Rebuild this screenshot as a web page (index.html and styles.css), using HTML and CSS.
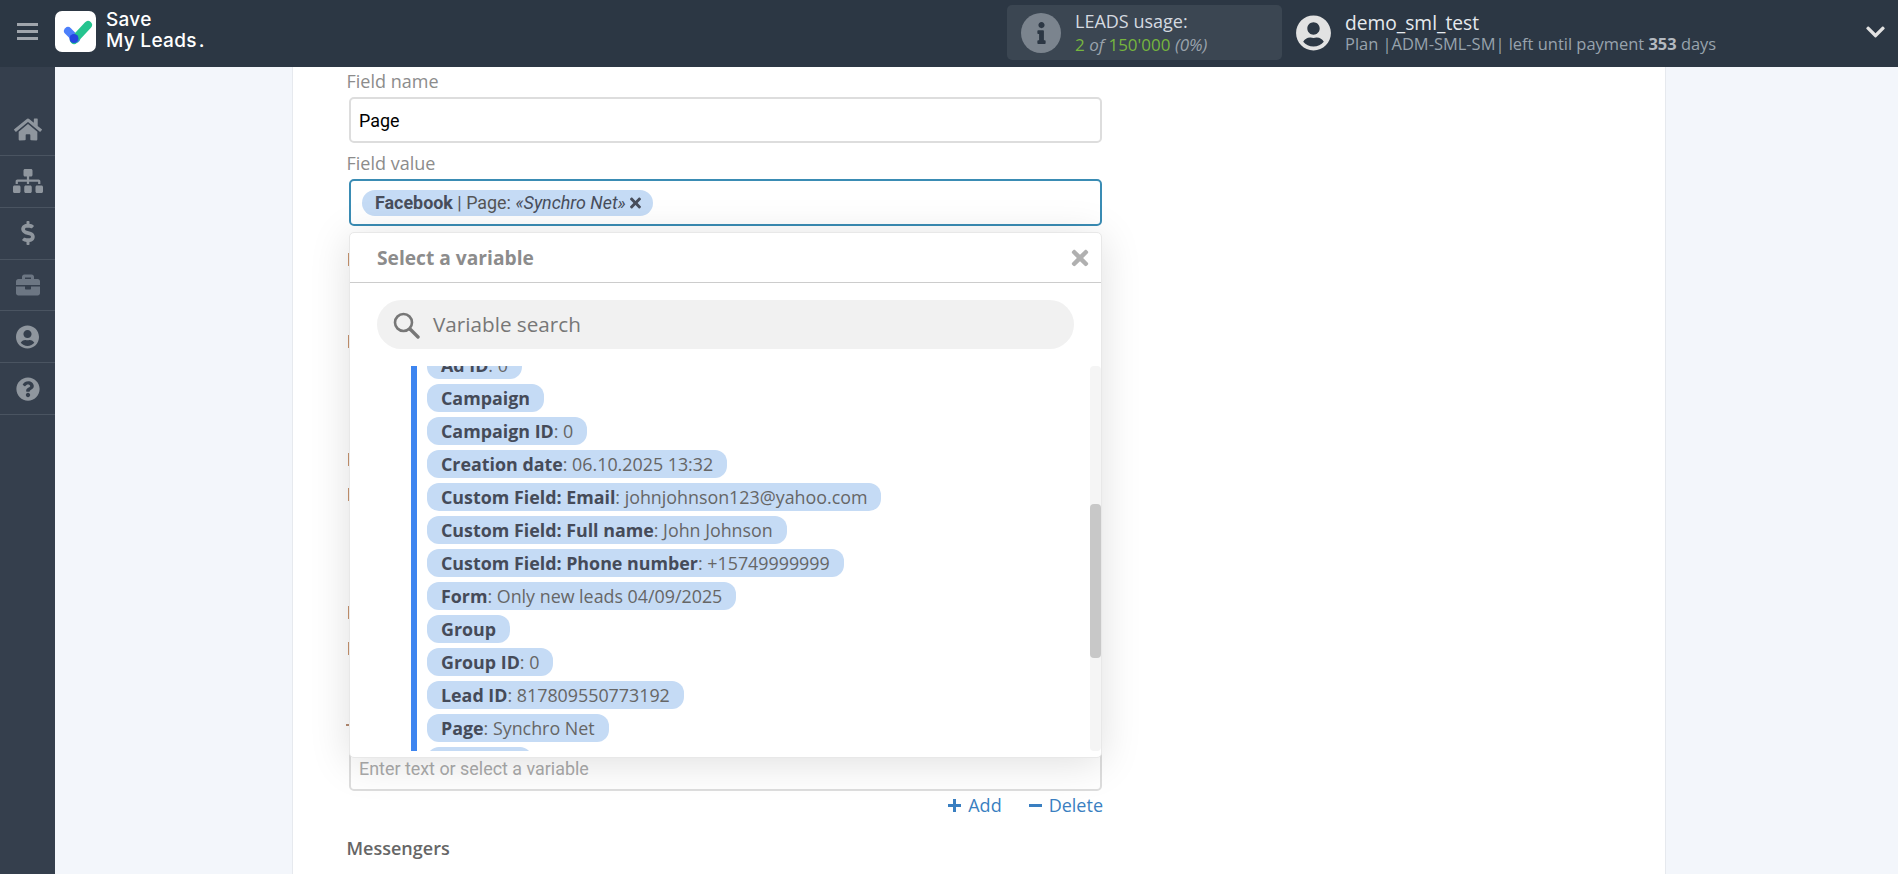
FILE: index.html
```html
<!DOCTYPE html>
<html lang="en">
<head>
<meta charset="utf-8">
<title>Save My Leads</title>
<link rel="stylesheet" href="styles.css">
</head>
<body>
<header class="topbar">
  <div class="burger"><span></span><span></span><span></span></div>
  <div class="logo-mark">
    <svg viewBox="0 0 41 41" width="41" height="41"><path d="M13 20l8 8" stroke="#4c7ffb" stroke-width="8" stroke-linecap="round" fill="none"/><path d="M19 29L33 14" stroke="#25c48f" stroke-width="8" stroke-linecap="round" fill="none"/><circle cx="19" cy="27.500" r="4.500" fill="#2545e0"/></svg>
  </div>
  <div class="logo-text">Save<br>My Leads<span class="logo-dot">.</span></div>
  <div class="usage">
    <div class="usage-icon"><svg viewBox="0 0 192 512" width="9" height="22"><path fill="#2c3744" d="M20 424.229h20V279.771H20c-11.046 0-20-8.954-20-20V212c0-11.046 8.954-20 20-20h112c11.046 0 20 8.954 20 20v212.229h20c11.046 0 20 8.954 20 20V492c0 11.046-8.954 20-20 20H20c-11.046 0-20-8.954-20-20v-47.771c0-11.046 8.954-20 20-20zM96 0C56.235 0 24 32.235 24 72s32.235 72 72 72 72-32.235 72-72S135.764 0 96 0z"/></svg></div>
    <div class="usage-text">
      <div class="usage-title">LEADS usage:</div>
      <div class="usage-count"><span class="green">2 <i>of</i> 150'000</span> <i class="muted">(0%)</i></div>
    </div>
  </div>
  <div class="account">
    <svg class="avatar" viewBox="0 0 496 512" width="35" height="36"><path fill="#e2e2e2" d="M248 8C111 8 0 119 0 256s111 248 248 248 248-111 248-248S385 8 248 8zm0 96c48.600 0 88 39.400 88 88s-39.400 88-88 88-88-39.400-88-88 39.400-88 88-88zm0 344c-58.700 0-111.300-26.600-146.500-68.200 18.800-35.400 55.600-59.800 98.500-59.800 2.400 0 4.800.4 7.100 1.100 13 4.200 26.600 6.900 40.900 6.900 14.300 0 28-2.700 40.900-6.900 2.300-.7 4.700-1.100 7.100-1.100 42.900 0 79.700 24.400 98.500 59.800C359.300 421.400 306.700 448 248 448z"/></svg>
    <div>
      <div class="account-name">demo_sml_test</div>
      <div class="account-plan">Plan |ADM-SML-SM| left until payment <b>353</b> days</div>
    </div>
  </div>
  <svg class="chevron" viewBox="0 0 448 512" width="19" height="22"><path fill="#e2e2e2" d="M207.029 381.476L12.686 187.132c-9.373-9.373-9.373-24.569 0-33.941l22.667-22.667c9.357-9.357 24.522-9.375 33.901-.04L224 284.505l154.745-154.021c9.379-9.335 24.544-9.317 33.901.04l22.667 22.667c9.373 9.373 9.373 24.569 0 33.941L240.971 381.476c-9.373 9.372-24.569 9.372-33.942 0z"/></svg>
</header>
<div class="layout">
  <nav class="sidebar">
    <a class="nav-item"><svg viewBox="0 0 576 512" width="28" height="25"><path d="M280.370 148.260L96 300.110V464a16 16 0 0 0 16 16l112.060-.29a16 16 0 0 0 15.920-16V368a16 16 0 0 1 16-16h64a16 16 0 0 1 16 16v95.640a16 16 0 0 0 16 16.050L464 480a16 16 0 0 0 16-16V300L295.670 148.260a12.190 12.190 0 0 0-15.300 0zM571.600 251.470L488 182.560V44.050a12 12 0 0 0-12-12h-56a12 12 0 0 0-12 12v72.610L318.470 43a48 48 0 0 0-61 0L4.340 251.470a12 12 0 0 0-1.600 16.900l25.500 31A12 12 0 0 0 45.150 301l235.220-193.740a12.190 12.190 0 0 1 15.300 0L530.900 301a12 12 0 0 0 16.900-1.600l25.500-31a12 12 0 0 0-1.700-16.930z"/></svg></a>
    <a class="nav-item"><svg viewBox="0 0 640 512" width="30" height="24"><path d="M128 352H32c-17.670 0-32 14.330-32 32v96c0 17.670 14.330 32 32 32h96c17.670 0 32-14.330 32-32v-96c0-17.670-14.330-32-32-32zm-24-80h192v48h48v-48h192v48h48v-57.590c0-21.170-17.230-38.410-38.410-38.410H344v-64h40c17.670 0 32-14.330 32-32V32c0-17.670-14.330-32-32-32H256c-17.670 0-32 14.330-32 32v96c0 17.670 14.330 32 32 32h40v64H94.410C73.230 224 56 241.230 56 262.410V320h48v-48zm264 80h-96c-17.670 0-32 14.330-32 32v96c0 17.670 14.330 32 32 32h96c17.670 0 32-14.330 32-32v-96c0-17.670-14.330-32-32-32zm240 0h-96c-17.670 0-32 14.330-32 32v96c0 17.670 14.330 32 32 32h96c17.670 0 32-14.330 32-32v-96c0-17.670-14.330-32-32-32z"/></svg></a>
    <a class="nav-item"><svg viewBox="0 0 288 512" width="14" height="24"><path d="M209.200 233.400l-108-31.600C88.700 198.200 80 186.500 80 173.500c0-16.300 13.200-29.500 29.500-29.500h66.300c12.200 0 24.200 3.700 34.200 10.500 6.100 4.100 14.300 3.100 19.500-2l34.800-34c7.100-6.900 6.100-18.400-1.800-24.500C238 74.800 207.400 64.100 176 64V16c0-8.800-7.200-16-16-16h-32c-8.800 0-16 7.200-16 16v48h-2.500C45.800 64-5.400 118.700.5 183.600c4.200 46.100 39.400 83.600 83.800 96.600l102.500 30c12.500 3.700 21.200 15.300 21.200 28.300 0 16.300-13.200 29.500-29.500 29.500h-66.300C100 368 88 364.300 78 357.500c-6.100-4.100-14.300-3.100-19.500 2l-34.800 34c-7.100 6.900-6.100 18.400 1.800 24.500 24.500 19.200 55.100 29.900 86.500 30v48c0 8.800 7.200 16 16 16h32c8.800 0 16-7.200 16-16v-48.200c46.600-.9 90.300-28.600 105.700-72.700 21.500-61.600-14.600-124.800-72.500-141.700z"/></svg></a>
    <a class="nav-item nav-dim"><svg viewBox="0 0 512 512" width="24" height="24"><path d="M320 336c0 8.840-7.160 16-16 16h-96c-8.840 0-16-7.160-16-16v-48H0v144c0 25.600 22.400 48 48 48h416c25.600 0 48-22.400 48-48V288H320v48zm144-208h-80V80c0-25.600-22.400-48-48-48H176c-25.600 0-48 22.400-48 48v48H48c-25.600 0-48 22.400-48 48v80h512v-80c0-25.600-22.400-48-48-48zm-144 0H192V96h128v32z"/></svg></a>
    <a class="nav-item"><svg viewBox="0 0 496 512" width="23" height="24"><path d="M248 8C111 8 0 119 0 256s111 248 248 248 248-111 248-248S385 8 248 8zm0 96c48.600 0 88 39.400 88 88s-39.400 88-88 88-88-39.400-88-88 39.400-88 88-88zm0 344c-58.700 0-111.300-26.600-146.500-68.200 18.800-35.400 55.600-59.800 98.500-59.800 2.400 0 4.800.4 7.100 1.100 13 4.200 26.600 6.900 40.900 6.900 14.300 0 28-2.700 40.900-6.900 2.300-.7 4.700-1.100 7.100-1.100 42.900 0 79.700 24.400 98.500 59.800C359.300 421.400 306.700 448 248 448z"/></svg></a>
    <a class="nav-item"><svg viewBox="0 0 512 512" width="24" height="24"><path d="M504 256c0 136.997-111.043 248-248 248S8 392.997 8 256C8 119.083 119.043 8 256 8s248 111.083 248 248zM262.655 90c-54.497 0-89.255 22.957-116.549 63.758-3.536 5.286-2.353 12.415 2.715 16.258l34.699 26.310c5.205 3.947 12.621 3.008 16.665-2.122 17.864-22.658 30.113-35.797 57.303-35.797 20.429 0 45.698 13.148 45.698 32.958 0 14.976-12.363 22.667-32.534 33.976C247.128 238.528 216 254.941 216 296v4c0 6.627 5.373 12 12 12h56c6.627 0 12-5.373 12-12v-1.333c0-28.462 83.186-29.647 83.186-106.667 0-58.002-60.165-102-116.531-102zM256 338c-25.365 0-46 20.635-46 46 0 25.364 20.635 46 46 46s46-20.636 46-46c0-25.365-20.635-46-46-46z"/></svg></a>
  </nav>
  <main class="panel">
    <form class="form">
      <label class="field-label">Field name</label>
      <div class="input">Page</div>
      <label class="field-label field-label-next">Field value</label>
      <div class="input input-focus">
        <span class="tag"><b>Facebook</b>&nbsp;| Page:&nbsp;<i>«Synchro Net»</i>
          <svg viewBox="0 0 352 512" width="11" height="16"><path fill="#484e5c" d="M242.720 256l100.070-100.070c12.280-12.280 12.280-32.190 0-44.480l-22.240-22.240c-12.280-12.280-32.190-12.280-44.480 0L176 189.280 75.930 89.210c-12.280-12.280-32.190-12.280-44.480 0L9.210 111.450c-12.280 12.280-12.280 32.190 0 44.480L109.280 256 9.210 356.070c-12.280 12.280-12.280 32.190 0 44.480l22.240 22.240c12.280 12.280 32.200 12.280 44.480 0L176 322.720l100.070 100.070c12.280 12.280 32.200 12.280 44.480 0l22.240-22.240c12.280-12.280 12.280-32.190 0-44.480L242.720 256z"/></svg>
        </span>
      </div>
      <div class="hidden-fields">
        <div class="stem s-1"></div>
        <div class="stem s-2"></div>
        <div class="stem s-3"></div>
        <div class="stem s-4"></div>
        <div class="stem s-3"></div>
        <div class="stem s-5"></div>
        <div class="stem-t"></div>
      </div>
      <div class="input input-last">Enter text or select a variable</div>
      <div class="actions">
        <a class="action"><span class="action-plus"></span>Add</a>
        <a class="action"><span class="action-minus"></span>Delete</a>
      </div>
      <div class="section-title">Messengers</div>
    </form>
    <section class="popup">
      <div class="popup-head">
        <span>Select a variable</span>
        <svg viewBox="0 0 352 512" width="18" height="24"><path fill="#b0b0b0" d="M242.720 256l100.070-100.070c12.280-12.280 12.280-32.190 0-44.480l-22.240-22.240c-12.280-12.280-32.190-12.280-44.480 0L176 189.280 75.930 89.210c-12.280-12.280-32.190-12.280-44.480 0L9.210 111.450c-12.280 12.280-12.280 32.190 0 44.480L109.280 256 9.210 356.070c-12.280 12.280-12.280 32.190 0 44.480l22.240 22.240c12.280 12.280 32.200 12.280 44.480 0L176 322.720l100.070 100.070c12.280 12.280 32.200 12.280 44.480 0l22.240-22.240c12.280-12.280 12.280-32.190 0-44.480L242.720 256z"/></svg>
      </div>
      <div class="search">
        <svg viewBox="0 0 28 28" width="28" height="28"><circle cx="11.500" cy="11.500" r="8.500" fill="none" stroke="#777" stroke-width="2.600"/><path d="M18 18l8 8" stroke="#777" stroke-width="3.400" stroke-linecap="round"/></svg>
        <span class="search-text">Variable search</span>
      </div>
      <div class="var-area">
        <div class="var-list">
          <div class="pill pill-first"><b>Ad ID</b>: 0</div>
          <div class="pill"><b>Campaign</b></div>
          <div class="pill"><b>Campaign ID</b>: 0</div>
          <div class="pill"><b>Creation date</b>: 06.10.2025 13:32</div>
          <div class="pill"><b>Custom Field: Email</b>: johnjohnson123@yahoo.com</div>
          <div class="pill"><b>Custom Field: Full name</b>: John Johnson</div>
          <div class="pill"><b>Custom Field: Phone number</b>: +15749999999</div>
          <div class="pill"><b>Form</b>: Only new leads 04/09/2025</div>
          <div class="pill"><b>Group</b></div>
          <div class="pill"><b>Group ID</b>: 0</div>
          <div class="pill"><b>Lead ID</b>: 817809550773192</div>
          <div class="pill"><b>Page</b>: Synchro Net</div>
          <div class="pill pill-cut"></div>
        </div>
        <div class="scrollbar"><div class="thumb"></div></div>
      </div>
    </section>
  </main>
</div>
</body>
</html>
```
FILE: styles.css
```css
* { box-sizing: border-box; }
html, body { margin: 0; height: 100%; overflow: hidden; }
body { font-family: "Open Sans", sans-serif; background: #f3f6fb; color: #555; }

.topbar { height: 67px; background: #2c3744; display: flex; align-items: center; position: relative; }
.burger { width: 21px; margin: 0 0 4px 17px; display: flex; flex-direction: column; gap: 4px; }
.burger span { height: 3px; background: #a0a5ac; }
.logo-mark { width: 41px; height: 41px; margin: 0 0 4px 17px; background: #fff; border-radius: 7px; }
.logo-mark svg { display: block; }
.logo-text { width: 110px; margin: 0 0 7px 10px; color: #fff; font: 500 19px/21px Inter, sans-serif; letter-spacing: .3px; }
.logo-dot { margin-left: 2px; }
.usage { margin: 0 0 2px 791px; width: 275px; height: 55px; background: #3b4652; border-radius: 5px; display: flex; align-items: center; padding-left: 14px; }
.usage-icon { width: 40px; height: 40px; border-radius: 50%; background: #7b848e; display: flex; align-items: center; justify-content: center; }
.usage-text { margin-left: 14px; font-size: 18px; line-height: 23px; }
.usage-title { color: #d5dae0; }
.usage-count { font-size: 17px; }
.green { color: #76b53e; }
.green i { color: #9aa3ac; }
.muted { color: #9aa3ac; }
.account { margin: 0 0 2px 14px; display: flex; align-items: center; gap: 14px; }
.avatar { display: block; }
.account-name { font-size: 19.200px; line-height: 23px; color: #e6eaee; }
.account-plan { font-size: 16.450px; line-height: 20px; color: #98a3ad; white-space: nowrap; }
.account-plan b { font-weight: 700; color: #b4bac1; }
.chevron { position: absolute; right: 13px; top: 21px; }

.layout { display: flex; height: 807px; }
.sidebar { width: 55px; background: #353f4d; padding-top: 37.200px; flex: none; }
.nav-item { height: 51.800px; display: flex; align-items: center; justify-content: center; border-bottom: 1px solid #4a5461; }
.nav-item svg { fill: #8f969e; }
.nav-dim svg { fill: #6c7683; }

.panel { position: relative; margin-left: 237px; width: 1374px; background: #fff; border-left: 1px solid #e6e9ee; border-right: 1px solid #e6e9ee; }
.form { width: 755px; margin-left: 54px; display: flex; flex-direction: column; }
.field-label { font-size: 18px; line-height: 22px; color: #8c8c8c; margin: 3px 0 0 -.5px; height: 27px; }
.field-label-next { margin-top: 9px; }
.input { height: 46px; margin-left: 2px; border: 2px solid #ddd; border-radius: 5px; font: 17.900px/43px Roboto, sans-serif; color: #000; padding-left: 8px; }
.input-focus { height: 47px; border-color: #3a8cb4; padding-left: 11px; display: flex; align-items: center; }
.tag { display: inline-flex; align-items: center; height: 26px; border-radius: 13px; background: #c5dbf5; padding: 0 12.500px 0 13px; color: #555; font: 17.900px Roboto, sans-serif; white-space: nowrap; }
.tag b { color: #484e5c; font-weight: 700; }
.tag i { color: #484e5c; }
.tag svg { margin-left: 4px; }

.hidden-fields { height: 519px; display: flex; flex-direction: column; align-items: flex-start; }
.stem { flex: none; width: 1px; height: 13px; margin-left: 1px; background: #c8946e; }
.s-1 { margin-top: 27px; }
.s-2 { margin-top: 69px; }
.s-3 { margin-top: 105px; }
.s-4 { margin-top: 22px; }
.s-5 { margin-top: 23px; }
.stem-t { flex: none; width: 3px; height: 2px; margin: 69px 0 0 -1px; background: #b58c72; }
.input-last { color: #aaa; }

.actions { display: flex; justify-content: flex-end; gap: 27px; font-size: 18px; line-height: 24px; color: #3a7fc1; margin: 2px -1px 0 0; }
.action { display: flex; align-items: center; gap: 7px; }
.action-plus { width: 13px; height: 13px; background: linear-gradient(#3a7fc1,#3a7fc1) center/100% 3px no-repeat, linear-gradient(#3a7fc1,#3a7fc1) center/3px 100% no-repeat; }
.action-minus { width: 13px; height: 3px; background: #3a7fc1; }
.section-title { font-size: 18px; font-weight: 600; color: #666; margin: 19px 0 0 -.5px; line-height: 24px; }

.popup { position: absolute; left: 56px; top: 165px; width: 753px; height: 526px; background: #fff; border: 1px solid #e8e8e8; border-radius: 5px; box-shadow: 0 5px 40px rgba(0,0,0,.13); display: flex; flex-direction: column; }
.popup-head { height: 50px; flex: none; border-bottom: 1px solid #ccc; display: flex; align-items: center; justify-content: space-between; padding: 0 12px 0 27px; font-size: 19.200px; font-weight: 700; color: #8c8c8c; }
.search { height: 49px; flex: none; margin: 17px 27px 0 27px; background: #f1f1f1; border-radius: 25px; display: flex; align-items: center; padding-left: 15px; gap: 13px; font-size: 20.700px; color: #777; }
.search-text { margin-bottom: 2px; }
.var-area { position: relative; flex: none; height: 385px; margin-top: 17px; overflow: hidden; }
.var-list { margin-left: 61px; border-left: 6px solid #3d85f0; height: 385px; padding-left: 10px; display: flex; flex-direction: column; align-items: flex-start; gap: 5px; overflow: hidden; }
.pill { flex: none; height: 28px; border-radius: 12px; background: #c5dbf5; padding: 0 14px; font-size: 17.850px; line-height: 28px; color: #666; white-space: nowrap; }
.pill b { color: #454b59; font-weight: 700; }
.pill-first { margin-top: -15px; }
.pill-cut { width: 105px; }
.scrollbar { position: absolute; right: 0; top: 0; width: 11px; height: 385px; background: #f5f5f5; border-radius: 4px; }
.thumb { margin-top: 138px; height: 154px; background: #c8c8c8; border-radius: 4px; }
```
